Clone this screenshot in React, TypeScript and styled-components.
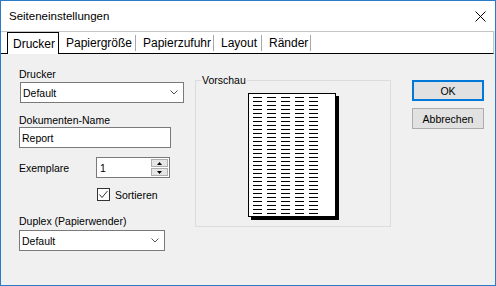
import styled, { createGlobalStyle } from "styled-components";

const GlobalStyle = createGlobalStyle`
  html, body { margin: 0; padding: 0; background: #fff; }
  body { font-family: "Liberation Sans", Arial, sans-serif; color: #000; }
  * { box-sizing: border-box; }
`;

const Window = styled.div`
  width: 496px;
  height: 286px;
  border: 1px solid #2b7bc9;
  background: #f0f0f0;
  display: flex;
  flex-direction: column;
`;

const TitleBar = styled.div`
  height: 30px;
  background: #fff;
  display: flex;
  align-items: center;
  justify-content: space-between;
  padding: 0 9px 0 8px;
  font-size: 11.5px;
`;

const TabStrip = styled.div`
  height: 23px;
  margin-right: 1px;
  background: #fff;
  border-top: 1px solid #c4c4c4;
  border-right: 1px solid #c4c4c4;
  border-bottom: 1px solid #000;
  display: flex;
  align-items: flex-end;
  padding-left: 6px;
`;

const ActiveTab = styled.div`
  width: 52px;
  height: 22px;
  margin-bottom: -1px;
  border: 1px solid #000;
  border-bottom: none;
  background: #fff;
  display: flex;
  align-items: center;
  padding-left: 5px;
  font-size: 12px;
`;

const Tab = styled.div<{ $w: number }>`
  width: ${(p) => p.$w}px;
  height: 21px;
  display: flex;
  align-items: center;
  justify-content: space-between;
  padding-left: 7px;
  font-size: 12px;
  margin-top: 1px;
`;

const TabSep = styled.span`
  width: 1px;
  height: 16px;
  background: #a8a8a8;
`;

const Body = styled.div`
  flex: 1;
  display: flex;
  align-items: flex-start;
  padding-left: 18px;
  font-size: 10.5px;
`;

const LeftCol = styled.div`
  width: 165px;
  padding-top: 13px;
  display: flex;
  flex-direction: column;
`;

const Label = styled.div<{ $mt?: number }>`
  line-height: 14px;
  height: 14px;
  margin-top: ${(p) => p.$mt ?? 0}px;
  white-space: nowrap;
`;

const Field = styled.div<{ $w: number; $mt?: number; $ml?: number }>`
  width: ${(p) => p.$w}px;
  height: 21px;
  margin-top: ${(p) => p.$mt ?? 0}px;
  margin-left: ${(p) => p.$ml ?? 0}px;
  border: 1px solid #7a7a7a;
  background: #fff;
  display: flex;
  align-items: center;
  justify-content: space-between;
  padding: 0 5px 0 2px;
`;

const SpinRow = styled.div`
  margin-top: 9px;
  display: flex;
  align-items: center;
`;

const SpinLabel = styled.div`
  width: 77px;
  line-height: 14px;
`;

const SpinBox = styled.div`
  width: 74px;
  height: 21px;
  border: 1px solid #7a7a7a;
  background: #fff;
  display: flex;
  align-items: center;
  justify-content: space-between;
  padding: 0 1px 0 3px;
`;

const SpinButtons = styled.div`
  display: flex;
  flex-direction: column;
  gap: 1px;
`;

const SpinBtn = styled.div`
  width: 17px;
  height: 8px;
  background: #e6e6e6;
  border: 1px solid #adadad;
  display: flex;
  align-items: center;
  justify-content: center;
`;

const CheckRow = styled.div`
  margin-top: 10px;
  margin-left: 78px;
  height: 13px;
  display: flex;
  align-items: center;
  gap: 5px;
`;

const CheckBox = styled.div`
  width: 13px;
  height: 13px;
  border: 1px solid #333;
  background: #fff;
`;

const GroupBox = styled.div`
  position: relative;
  margin-left: 11px;
  margin-top: 26px;
  width: 196px;
  height: 147px;
  border: 1px solid #dcdcdc;
`;

const Legend = styled.span`
  position: absolute;
  top: -7px;
  left: 5px;
  padding: 0 1px;
  background: #f0f0f0;
  line-height: 12px;
`;

const PagePreview = styled.svg`
  display: block;
  margin: 12px 0 0 52px;
`;

const ButtonCol = styled.div`
  margin-left: 21px;
  margin-top: 26px;
  display: flex;
  flex-direction: column;
  gap: 7px;
`;

const Button = styled.div<{ $default?: boolean }>`
  width: 72px;
  height: 21px;
  background: #e1e1e1;
  border: ${(p) => (p.$default ? "2px solid #0078d7" : "1px solid #adadad")};
  display: flex;
  align-items: center;
  justify-content: center;
`;

const Chevron = () => (
  <svg width="8" height="5" viewBox="0 0 8 5">
    <polyline points="0.5,0.5 4,4 7.5,0.5" fill="none" stroke="#555" strokeWidth="1" />
  </svg>
);

const rows = Array.from({ length: 30 }, (_, i) => 4 + i * 4);
const cols = [5, 19, 33, 47, 61];

export default function App() {
  return (
    <>
      <GlobalStyle />
      <Window>
        <TitleBar>
          <span>Seiteneinstellungen</span>
          <svg width="11" height="11" viewBox="0 0 11 11">
            <path d="M0.5 0.5 L10.5 10.5 M10.5 0.5 L0.5 10.5" stroke="#000" strokeWidth="1" />
          </svg>
        </TitleBar>
        <TabStrip>
          <ActiveTab>Drucker</ActiveTab>
          <Tab $w={77}>Papiergröße<TabSep /></Tab>
          <Tab $w={78}>Papierzufuhr<TabSep /></Tab>
          <Tab $w={48}>Layout<TabSep /></Tab>
          <Tab $w={49}>Ränder<TabSep /></Tab>
        </TabStrip>
        <Body>
          <LeftCol>
            <Label>Drucker</Label>
            <Field $w={164} $mt={1} $ml={1}>
              <span>Default</span>
              <Chevron />
            </Field>
            <Label $mt={10}>Dokumenten-Name</Label>
            <Field $w={152}>
              <span>Report</span>
            </Field>
            <SpinRow>
              <SpinLabel>Exemplare</SpinLabel>
              <SpinBox>
                <span>1</span>
                <SpinButtons>
                  <SpinBtn>
                    <svg width="5" height="3" viewBox="0 0 5 3">
                      <polygon points="2.5,0 5,3 0,3" fill="#000" />
                    </svg>
                  </SpinBtn>
                  <SpinBtn>
                    <svg width="5" height="3" viewBox="0 0 5 3">
                      <polygon points="0,0 5,0 2.5,3" fill="#000" />
                    </svg>
                  </SpinBtn>
                </SpinButtons>
              </SpinBox>
            </SpinRow>
            <CheckRow>
              <CheckBox>
                <svg width="11" height="11" viewBox="0 0 11 11">
                  <polyline points="1.5,5.5 4,8.5 9.5,2" fill="none" stroke="#333" strokeWidth="1" />
                </svg>
              </CheckBox>
              <span>Sortieren</span>
            </CheckRow>
            <Label $mt={13}>Duplex (Papierwender)</Label>
            <Field $w={146} $mt={2}>
              <span>Default</span>
              <Chevron />
            </Field>
          </LeftCol>
          <GroupBox>
            <Legend>Vorschau</Legend>
            <PagePreview width="91" height="127" viewBox="0 0 91 127">
              <rect x="3" y="3" width="88" height="124" fill="#000" />
              <rect x="0.5" y="0.5" width="87" height="123" fill="#fff" stroke="#000" />
              {rows.map((y) =>
                cols.map((x) => <rect key={`${x}-${y}`} x={x} y={y} width="9" height="1" fill="#000" />)
              )}
            </PagePreview>
          </GroupBox>
          <ButtonCol>
            <Button $default>OK</Button>
            <Button>Abbrechen</Button>
          </ButtonCol>
        </Body>
      </Window>
    </>
  );
}
